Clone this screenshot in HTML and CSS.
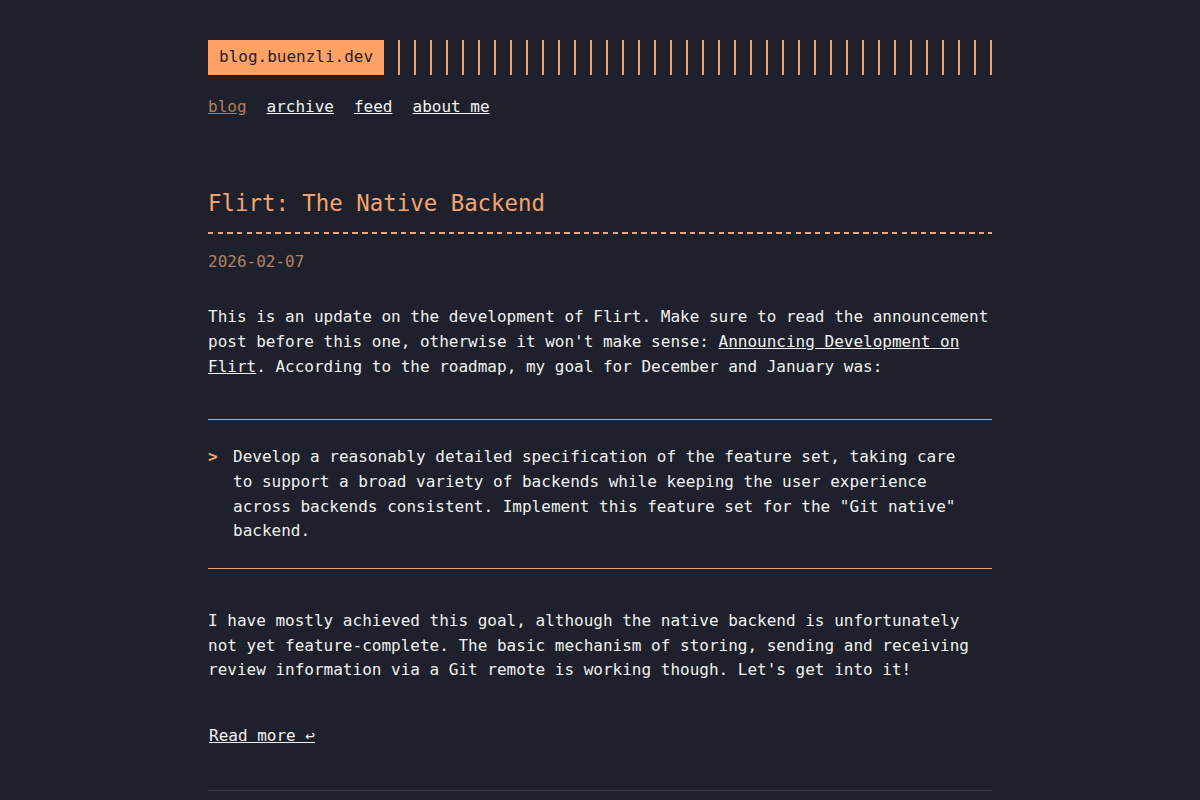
FILE: index.html
```html
<!DOCTYPE html>
<html lang="en">
<head>
<meta charset="utf-8">
<title>blog.buenzli.dev</title>
<link rel="stylesheet" href="styles.css">
</head>
<body>
<div class="page">
  <header class="site-header">
    <div class="brand">
      <a class="logo" href="#">blog.buenzli.dev</a>
      <div class="bars"></div>
    </div>
    <nav class="nav">
      <a class="nav-link active" href="#">blog</a>
      <a class="nav-link" href="#">archive</a>
      <a class="nav-link" href="#">feed</a>
      <a class="nav-link" href="#">about me</a>
    </nav>
  </header>
  <main>
    <article class="post">
      <h1 class="post-title">Flirt: The Native Backend</h1>
      <div class="dash-rule"></div>
      <div class="post-date">2026-02-07</div>
      <p class="para first">This is an update on the development of Flirt. Make sure to read the announcement post before this one, otherwise it won't make sense: <a href="#">Announcing Development on Flirt</a>. According to the roadmap, my goal for December and January was:</p>
      <blockquote class="quote">
        <p>Develop a reasonably detailed specification of the feature set, taking care to support a broad variety of backends while keeping the user experience across backends consistent. Implement this feature set for the "Git native" backend.</p>
      </blockquote>
      <p class="para second">I have mostly achieved this goal, although the native backend is unfortunately not yet feature-complete. The basic mechanism of storing, sending and receiving review information via a Git remote is working though. Let's get into it!</p>
      <a class="read-more" href="#">Read more ↩</a>
    </article>
    <hr class="post-sep">
  </main>
</div>
</body>
</html>
```

FILE: styles.css
```css
html, body {
  margin: 0;
  padding: 0;
  background: #1e212b;
}

body {
  font-family: "DejaVu Sans Mono", "Liberation Mono", monospace;
  font-size: 16px;
  line-height: 24.67px;
  color: #f0f0f0;
}

a {
  color: #f2f2f2;
  text-decoration: underline;
}

.page {
  width: 784px;
  margin: 0 auto;
  padding-top: 40px;
}

.brand {
  display: flex;
  height: 35px;
  align-items: stretch;
}

.logo {
  display: flex;
  align-items: center;
  padding: 0 11px 2px;
  background: #ffa263;
  color: #1e212b;
  text-decoration: none;
  line-height: 1;
}

.bars {
  flex: 1;
  margin-left: 14px;
  background: repeating-linear-gradient(90deg, #f5a069 0 2px, transparent 2px 16px);
}

.nav {
  display: flex;
  gap: 20px;
  margin-top: 20px;
}

.nav-link.active {
  color: #b27c5f;
}

.post-title {
  margin: 69px 0 0;
  font-size: 22.4px;
  line-height: 29px;
  font-weight: normal;
  color: #f5a46d;
}

.dash-rule {
  height: 2px;
  margin-top: 14px;
  background: repeating-linear-gradient(90deg, #eba57c 0 5.5px, transparent 5.5px 9.633px);
}

.post-date {
  margin-top: 16px;
  color: #b48062;
}

.para {
  margin: 0;
}

.para.first {
  margin-top: 31px;
}

.quote {
  margin: 40px 0 0;
  padding: 25px 25px 24px 0;
  border-top: 1px solid #e2a47e;
  border-bottom: 1px solid #e2a47e;
  display: flex;
}

.quote::before {
  content: ">";
  flex: 0 0 25px;
  color: #f5a46d;
  font-weight: bold;
}

.quote p {
  margin: 0;
}

.para.second {
  margin-top: 40px;
}

.read-more {
  display: inline-block;
  margin: 41px 0 0 1px;
}

.post-sep {
  margin: 41px 0 0;
  border: 0;
  height: 1px;
  background: #363a46;
}
```
